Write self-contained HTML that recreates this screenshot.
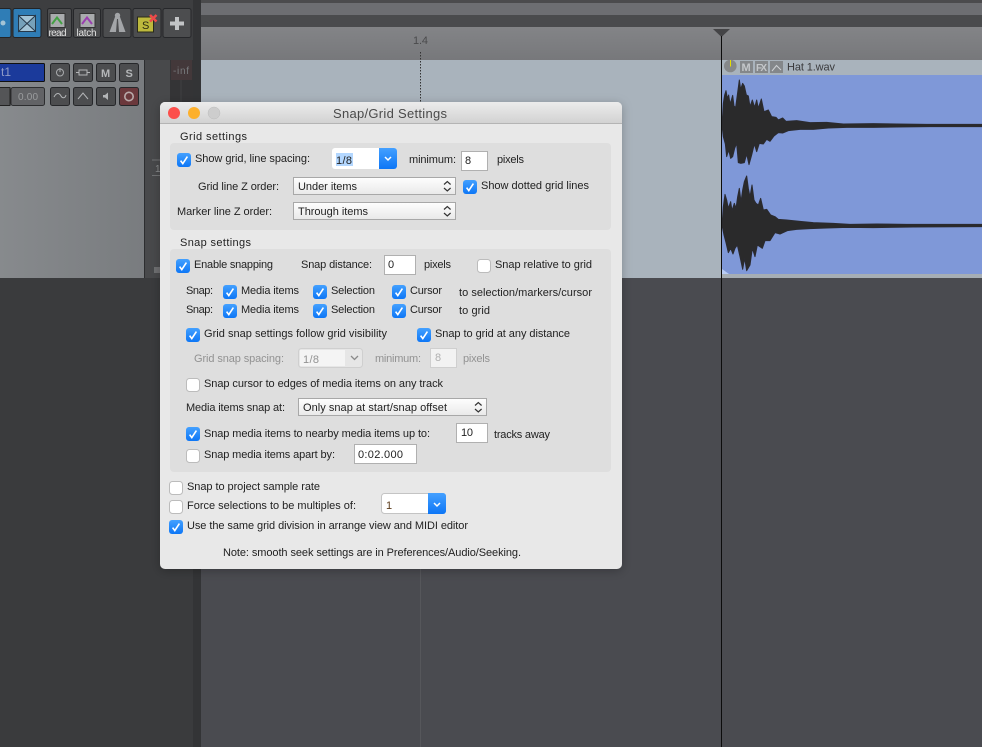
<!DOCTYPE html>
<html><head><meta charset="utf-8"><title>Snap/Grid Settings</title>
<style>
html,body{margin:0;padding:0;background:#3a3b3d;width:982px;height:747px;overflow:hidden}
svg{display:block}
text{font-family:"Liberation Sans",sans-serif;font-size:11px;fill:#222;white-space:pre}
.g{fill:#929292}
.tb{fill:#4c4d4f;stroke:#26272a;stroke-width:1}
</style></head><body>
<svg width="982" height="747" viewBox="0 0 982 747" xmlns="http://www.w3.org/2000/svg">
<defs>
<linearGradient id="cb" x1="0" y1="0" x2="0" y2="1"><stop offset="0" stop-color="#44a0ff"/><stop offset="1" stop-color="#0d76f6"/></linearGradient>
<linearGradient id="sel" x1="0" y1="0" x2="0" y2="1"><stop offset="0" stop-color="#fefefe"/><stop offset="1" stop-color="#e9e9e9"/></linearGradient>
<linearGradient id="tbar" x1="0" y1="0" x2="0" y2="1"><stop offset="0" stop-color="#ececec"/><stop offset="1" stop-color="#d2d2d2"/></linearGradient>
<linearGradient id="ruler" x1="0" y1="0" x2="0" y2="1"><stop offset="0" stop-color="#838487"/><stop offset="1" stop-color="#77787b"/></linearGradient>
<linearGradient id="tp" x1="0" y1="0" x2="1" y2="0"><stop offset="0" stop-color="#878a8d"/><stop offset="1" stop-color="#797c7f"/></linearGradient>
<filter id="sh" x="-15%" y="-15%" width="130%" height="130%"><feDropShadow dx="0" dy="2" stdDeviation="5" flood-color="#000" flood-opacity=".25"/></filter>
<g id="c"><rect width="14" height="14" rx="3" fill="url(#cb)"/><path d="M3.6 7.6L5.8 10.6L10.4 3.6" fill="none" stroke="#fff" stroke-width="1.6"/></g>
<g id="u"><rect x=".5" y=".5" width="13" height="13" rx="3" fill="#fff" stroke="#bcbcbc"/></g>
<g id="ch"><path d="M0 3.5L3.3 0.5L6.6 3.5M0 7L3.3 10L6.6 7" fill="none" stroke="#333" stroke-width="1.2"/></g>
</defs>

<!-- base -->
<rect width="982" height="747" fill="#3a3b3d"/>
<rect x="0" y="0" width="193" height="60" fill="#3d3e40"/>
<rect x="193" y="0" width="8" height="747" fill="#333436"/>
<rect x="201" y="0" width="781" height="747" fill="#4a4b50"/>
<rect x="201" y="0" width="781" height="3" fill="#4b4b4d"/>
<rect x="201" y="3" width="781" height="12" fill="#6d6e72"/>
<rect x="201" y="15" width="781" height="12" fill="#4a4b4d"/>
<rect x="201" y="27" width="781" height="33" fill="url(#ruler)"/>
<text x="413" y="44" textLength="15" style="fill:#4a4a4c">1.4</text>
<rect x="201" y="60" width="781" height="218" fill="#a9b3bc"/>
<path d="M420.500 52V102" stroke="#333" stroke-dasharray="1.500 1.500"/>
<path d="M420.500 278V747" stroke="#56575b"/>

<!-- item -->
<rect x="722" y="75" width="260" height="199" fill="#7f98d8"/>
<rect x="722" y="274" width="260" height="4" fill="#a6aeb5"/>
<path d="M722 269L729 274H722Z" fill="#b9cdf5"/>
<g transform="translate(700 0) scale(.33333)" fill="#2a2a2b" stroke="#2a2a30" stroke-width="3" stroke-linejoin="round">
<polygon points="66,376 70,310 74,285 78,272 82,295 86,285 90,312 94,300 98,286 102,318 107,322 112,285 118,240 122,268 128,250 133,258 139,285 145,288 150,320 157,300 164,322 170,300 175,325 184,297 192,335 205,330 215,350 228,352 235,360 248,354 258,364 290,362 330,368 380,367 430,372 520,371 590,372 680,373 846,373 846,380 690,380 590,381 520,382 440,382 385,384 340,388 300,388 265,392 248,399 235,398 222,408 210,424 200,418 190,432 178,430 170,455 163,432 155,465 147,494 140,462 133,488 122,490 115,488 110,430 104,445 98,470 92,475 86,450 80,470 76,432 70,410"/>
<polygon points="66,676 70,620 75,583 80,600 85,625 92,605 96,632 103,610 108,625 113,590 118,565 123,605 128,570 133,545 140,528 145,565 150,590 156,555 162,600 168,610 175,615 182,595 190,630 200,628 212,645 225,650 235,658 260,660 300,664 340,668 400,670 450,673 530,672 620,673 846,673 846,680 640,681 520,683 440,682 380,684 330,686 290,688 262,692 240,702 225,698 210,722 195,722 187,745 172,735 165,770 157,745 150,795 140,812 134,775 128,808 120,770 112,735 105,745 99,762 92,745 85,758 78,728 72,705"/>
</g>
<!-- item header -->
<circle cx="730.300" cy="66" r="6.300" fill="#86888a"/>
<path d="M730.500 60V66.500" stroke="#e6e000" stroke-width="1"/>
<rect x="740" y="61" width="13" height="12" fill="#84878a"/>
<text x="741.500" y="71" textLength="10" style="fill:#c4c7ca;font-weight:bold;font-size:11px">M</text>
<rect x="755" y="61" width="13" height="12" fill="#84878a"/>
<text x="756" y="71" textLength="11" style="fill:#c4c7ca;font-weight:bold;font-size:10px">FX</text>
<rect x="770" y="61" width="13" height="12" fill="#84878a"/>
<path d="M772 71L776.500 65.500L781 70" fill="none" stroke="#cfd2d5"/>
<text x="787" y="70.500" textLength="48" style="fill:#3a3a3c;font-size:11px">Hat 1.wav</text>
<!-- playhead -->
<path d="M713 29H730L721.500 37Z" fill="#444446"/>
<path d="M721.500 36V747" stroke="#0c0c0c"/>

<!-- left toolbar -->
<rect x="-4" y="8.500" width="15" height="29" rx="2" fill="#2f7db6" stroke="#232426"/>
<rect x="13" y="8.500" width="28" height="29" rx="2" fill="#2f7db6" stroke="#232426"/>
<rect x="18.500" y="15.500" width="17" height="16" fill="#a4c4d6" stroke="#26384a"/>
<path d="M18.500 15.500L27 23.500L18.500 31.500ZM35.500 15.500L27 23.500L35.500 31.500Z" fill="#76a1ba" stroke="#26384a"/>
<circle cx="3" cy="23" r="2.500" fill="#a4c4d6"/>
<rect class="tb" x="47.500" y="8.500" width="24" height="29" rx="2"/>
<rect x="50" y="13.500" width="15" height="14" fill="#a9abad" stroke="#333"/><path d="M52 24L57 17.500L62 24" fill="none" stroke="#43a043" stroke-width="2"/>
<rect class="tb" x="73.500" y="8.500" width="27" height="29" rx="2"/>
<rect x="80" y="13.500" width="15" height="14" fill="#a9abad" stroke="#333"/><path d="M82 24L87 17.500L92 24" fill="none" stroke="#9a3fb0" stroke-width="2"/>
<text x="48.500" y="36" textLength="18" style="fill:#e4e4e4;font-size:10px">read</text>
<text x="76.500" y="36" textLength="20" style="fill:#e4e4e4;font-size:10px">latch</text>
<rect class="tb" x="103" y="8.500" width="28" height="29" rx="2"/>
<path d="M109.500 32L115 17H120L125.500 32Z" fill="#a3a5a8"/><path d="M116.500 32L117.500 19L118.500 32Z" fill="#4c4d4f" stroke="#4c4d4f"/><circle cx="117.500" cy="15.500" r="2.700" fill="#a3a5a8"/>
<rect class="tb" x="133" y="8.500" width="28" height="29" rx="2"/>
<rect x="137.500" y="17" width="16" height="15" fill="#bdb93d" stroke="#2a2a1a"/>
<text x="142" y="29" style="fill:#2a2a10;font-size:11px">S</text>
<path d="M150 15L156.500 21.500M156.500 15L150 21.500" stroke="#ec4a4a" stroke-width="2.600"/>
<rect class="tb" x="163" y="8.500" width="28" height="29" rx="2"/>
<path d="M177 17V30M170 23.500H184" stroke="#c2c4c6" stroke-width="4"/>

<!-- track panel -->
<rect x="0" y="60" width="144" height="218" fill="url(#tp)"/>
<rect x="144" y="60" width="1" height="218" fill="#2d2e30"/>
<rect x="145" y="60" width="25" height="218" fill="#48494b"/>
<rect x="170" y="60" width="23" height="218" fill="#343436"/>
<rect x="171" y="60" width="21" height="20" fill="#43383a"/>
<text x="173" y="74" textLength="16" style="fill:#77797c;font-size:10px">-inf</text>
<path d="M181 80V278" stroke="#3f4042"/>
<path d="M152 160H170M152 175.500H170" stroke="#717274"/>
<text x="155" y="172" style="fill:#8a8c8e;font-size:10px">1</text>
<rect x="154" y="267" width="8" height="6" fill="#6e6f71"/>
<rect x="-4" y="63.500" width="48.500" height="18" rx="1" fill="#1b3a9b" stroke="#101010"/>
<text x="1" y="76" textLength="10" style="fill:#8f9cc8;font-size:12px">t 1</text>
<rect x="-4" y="87.500" width="14" height="18" fill="#545557" stroke="#222"/>
<rect x="11" y="87.500" width="33.500" height="18" rx="2" fill="#626366" stroke="#2d2e30"/>
<text x="18" y="100" textLength="20" style="fill:#9a9c9e;font-size:10px">0.00</text>
<rect class="tb" x="50.500" y="63.500" width="19" height="18" rx="2"/>
<circle cx="60" cy="72.500" r="3.500" fill="none" stroke="#a9abad"/><path d="M60 68V72" stroke="#a9abad"/>
<rect class="tb" x="73.500" y="63.500" width="19" height="18" rx="2"/>
<rect x="79" y="70" width="8" height="5" fill="none" stroke="#b3b5b7"/><path d="M76 72.500H79M87 72.500H90" stroke="#b3b5b7"/>
<rect class="tb" x="96.500" y="63.500" width="19" height="18" rx="2"/>
<text x="101" y="77" textLength="10" style="fill:#b5b7b9;font-weight:bold;font-size:11px">M</text>
<rect class="tb" x="119.500" y="63.500" width="19" height="18" rx="2"/>
<text x="125.500" y="77" style="fill:#b5b7b9;font-weight:bold;font-size:11px">S</text>
<rect class="tb" x="50.500" y="87.500" width="19" height="18" rx="2"/>
<path d="M54 97C57 91 60 94 61 96S65 99 66 95" fill="none" stroke="#b3b5b7"/>
<rect class="tb" x="73.500" y="87.500" width="19" height="18" rx="2"/>
<path d="M78 99L83 93L88 99" fill="none" stroke="#b3b5b7"/>
<rect class="tb" x="96.500" y="87.500" width="19" height="18" rx="2"/>
<path d="M103 95H105L108 92.500V100L105 97.500H103Z" fill="#b3b5b7"/>
<rect x="119.500" y="87.500" width="19" height="18" rx="2" fill="#6b383c" stroke="#26272a"/>
<circle cx="129" cy="96.500" r="4.200" fill="none" stroke="#b9a9aa" stroke-width="1.600"/>

<!-- dialog -->
<g filter="url(#sh)"><rect x="160" y="102" width="462" height="467" rx="5" fill="#e8e8e8"/></g>
<path d="M160 123V107a5 5 0 0 1 5-5H617a5 5 0 0 1 5 5V123Z" fill="url(#tbar)"/>
<rect x="160" y="123" width="462" height="1" fill="#b4b4b4"/>
<circle cx="174" cy="113" r="6" fill="#fc4f4b"/>
<circle cx="194" cy="113" r="6" fill="#fdb02c"/>
<circle cx="214" cy="113" r="6" fill="#cdcdcd" stroke="#bdbdbd" stroke-width=".5"/>
<text x="333" y="118" textLength="114" style="font-size:13px;fill:#4a4a4a">Snap/Grid Settings</text>

<rect x="170" y="143" width="441" height="87" rx="4" fill="#dedede"/>
<rect x="170" y="249" width="441" height="223" rx="4" fill="#dedede"/>

<text x="180" y="140" textLength="67">Grid settings</text>
<use href="#c" x="177" y="153"/>
<text x="195" y="162" textLength="115">Show grid, line spacing:</text>
<rect x="332" y="148" width="65" height="21" rx="3" fill="#fff"/>
<path d="M379 148H394a3 3 0 0 1 3 3V166a3 3 0 0 1-3 3H379Z" fill="url(#cb)"/>
<path d="M385 157L388 160L391 157" fill="none" stroke="#fff" stroke-width="1.500"/>
<rect x="336" y="153" width="17" height="13" fill="#b3d7ff"/>
<text x="336" y="164" textLength="16">1/8</text>
<text x="409" y="163" textLength="47">minimum:</text>
<rect x="461.500" y="151.500" width="26" height="19" fill="#fff" stroke="#b0b0b0"/>
<text x="465" y="164">8</text>
<text x="497" y="163" textLength="27">pixels</text>
<text x="198" y="190" textLength="81">Grid line Z order:</text>
<rect x="293.500" y="177.500" width="162" height="17" fill="url(#sel)" stroke="#a8a8a8"/>
<text x="298" y="190" textLength="59">Under items</text>
<use href="#ch" x="444" y="181"/>
<use href="#c" x="463" y="180"/>
<text x="481" y="189" textLength="108">Show dotted grid lines</text>
<text x="177" y="215" textLength="95">Marker line Z order:</text>
<rect x="293.500" y="202.500" width="162" height="17" fill="url(#sel)" stroke="#a8a8a8"/>
<text x="298" y="215" textLength="70">Through items</text>
<use href="#ch" x="444" y="206"/>

<text x="180" y="246" textLength="71">Snap settings</text>
<use href="#c" x="176" y="259"/>
<text x="194" y="268" textLength="79">Enable snapping</text>
<text x="301" y="268" textLength="71">Snap distance:</text>
<rect x="384.500" y="255.500" width="31" height="19" fill="#fff" stroke="#b0b0b0"/>
<text x="388" y="268">0</text>
<text x="424" y="268" textLength="27">pixels</text>
<use href="#u" x="477" y="259"/>
<text x="495" y="268" textLength="97">Snap relative to grid</text>

<text x="186" y="294" textLength="27">Snap:</text>
<use href="#c" x="223" y="285"/><text x="241" y="294" textLength="58">Media items</text>
<use href="#c" x="313" y="285"/><text x="331" y="294" textLength="44">Selection</text>
<use href="#c" x="392" y="285"/><text x="410" y="294" textLength="32">Cursor</text>
<text x="459" y="296" textLength="133">to selection/markers/cursor</text>
<text x="186" y="313" textLength="27">Snap:</text>
<use href="#c" x="223" y="304"/><text x="241" y="313" textLength="58">Media items</text>
<use href="#c" x="313" y="304"/><text x="331" y="313" textLength="44">Selection</text>
<use href="#c" x="392" y="304"/><text x="410" y="313" textLength="32">Cursor</text>
<text x="459" y="314" textLength="31">to grid</text>

<use href="#c" x="186" y="328"/>
<text x="204" y="337" textLength="183">Grid snap settings follow grid visibility</text>
<use href="#c" x="417" y="328"/>
<text x="435" y="337" textLength="135">Snap to grid at any distance</text>

<text class="g" x="194" y="362" textLength="90">Grid snap spacing:</text>
<rect x="298.500" y="348.500" width="64" height="19" rx="3" fill="#e6e6e6" stroke="#cfcfcf"/>
<rect x="300" y="350" width="45" height="16" fill="#f4f4f4"/>
<path d="M351 356L354.500 359.500L358 356" fill="none" stroke="#8a8a8a" stroke-width="1.300"/>
<text class="g" x="303" y="363" textLength="16">1/8</text>
<text class="g" x="375" y="362" textLength="46">minimum:</text>
<rect x="430.500" y="348.500" width="26" height="19" fill="#f2f2f2" stroke="#cfcfcf"/>
<text class="g" x="435" y="361" style="fill:#b0b0b0">8</text>
<text class="g" x="463" y="362" textLength="27">pixels</text>

<use href="#u" x="186" y="378"/>
<text x="204" y="387" textLength="239">Snap cursor to edges of media items on any track</text>
<text x="186" y="411" textLength="99">Media items snap at:</text>
<rect x="298.500" y="398.500" width="188" height="17" fill="url(#sel)" stroke="#a8a8a8"/>
<text x="303" y="411" textLength="144">Only snap at start/snap offset</text>
<use href="#ch" x="475" y="402"/>

<use href="#c" x="186" y="427"/>
<text x="204" y="437" textLength="226">Snap media items to nearby media items up to:</text>
<rect x="456.500" y="423.500" width="31" height="19" fill="#fff" stroke="#b0b0b0"/>
<text x="461" y="436" textLength="12">10</text>
<text x="494" y="438" textLength="56">tracks away</text>
<use href="#u" x="186" y="449"/>
<text x="204" y="458" textLength="131">Snap media items apart by:</text>
<rect x="354.500" y="444.500" width="62" height="19" fill="#fff" stroke="#b0b0b0"/>
<text x="358" y="458" textLength="45">0:02.000</text>

<use href="#u" x="169" y="481"/>
<text x="187" y="490" textLength="133">Snap to project sample rate</text>
<use href="#u" x="169" y="500"/>
<text x="187" y="509" textLength="169">Force selections to be multiples of:</text>
<rect x="381.500" y="493.500" width="64" height="20" rx="3" fill="#fff" stroke="#c4c4c4"/>
<path d="M428 493H443a3 3 0 0 1 3 3V511a3 3 0 0 1-3 3H428Z" fill="url(#cb)"/>
<path d="M434 503L437 506L440 503" fill="none" stroke="#fff" stroke-width="1.500"/>
<text x="386" y="509" style="fill:#5a3a1a">1</text>
<use href="#c" x="169" y="520"/>
<text x="187" y="529" textLength="281">Use the same grid division in arrange view and MIDI editor</text>
<text x="223" y="556" textLength="298">Note: smooth seek settings are in Preferences/Audio/Seeking.</text>
</svg>
</body></html>
